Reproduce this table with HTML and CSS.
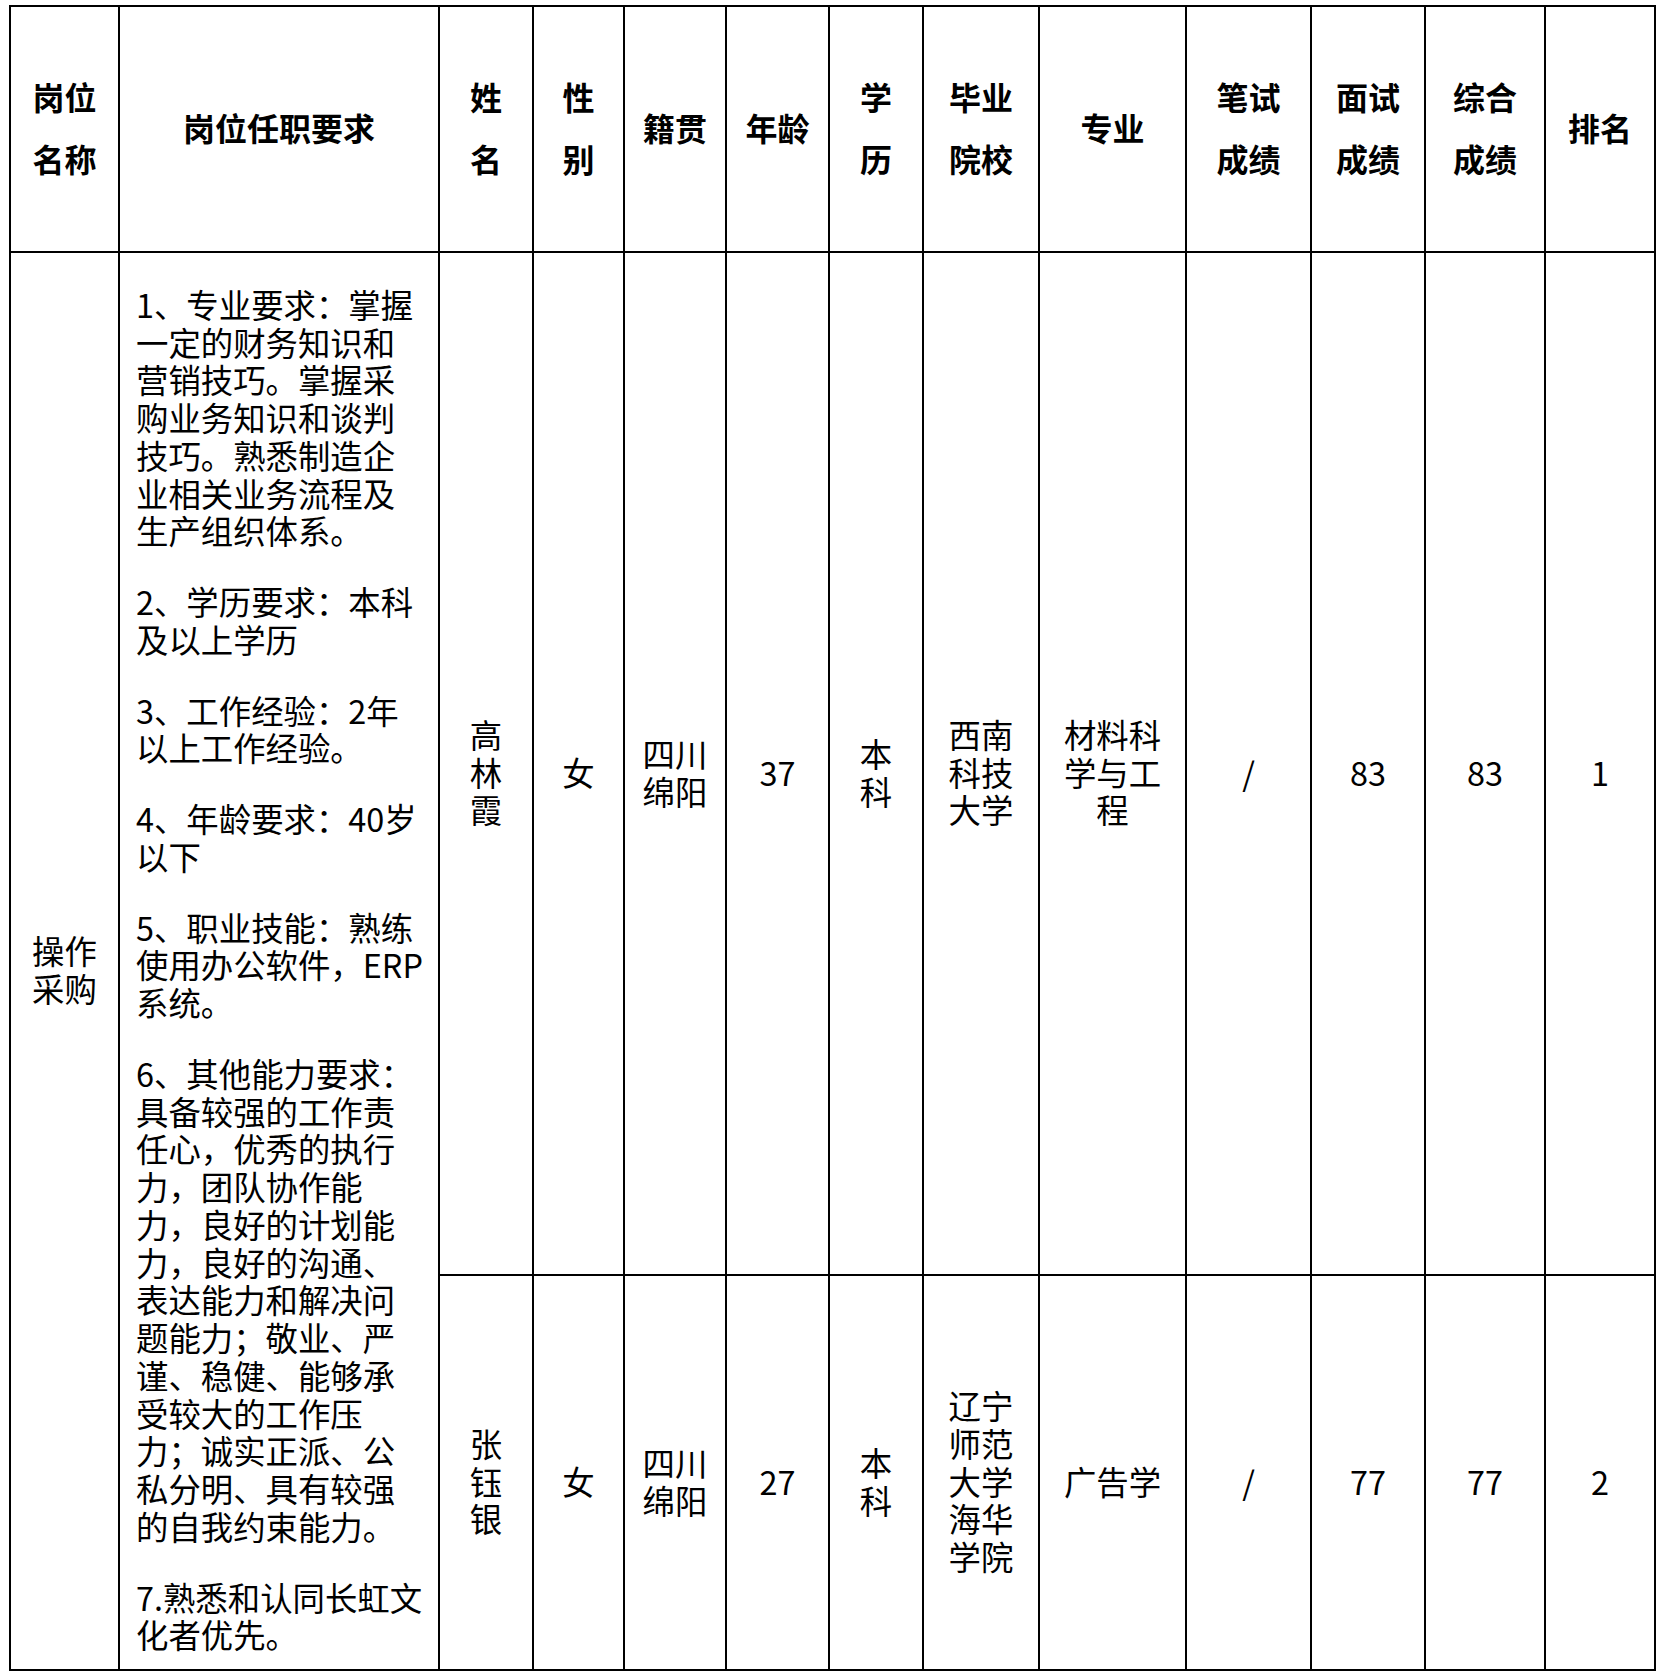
FILE: index.html
```html
<!DOCTYPE html>
<html lang="zh-CN">
<head>
<meta charset="utf-8">
<title>岗位成绩表</title>
<link rel="stylesheet" href="styles.css">
</head>
<body>
<div class="sheet">
  <div class="cell head">岗位<br>名称</div>
  <div class="cell head">岗位任职要求</div>
  <div class="cell head">姓<br>名</div>
  <div class="cell head">性<br>别</div>
  <div class="cell head">籍贯</div>
  <div class="cell head">年龄</div>
  <div class="cell head">学<br>历</div>
  <div class="cell head">毕业<br>院校</div>
  <div class="cell head">专业</div>
  <div class="cell head">笔试<br>成绩</div>
  <div class="cell head">面试<br>成绩</div>
  <div class="cell head">综合<br>成绩</div>
  <div class="cell head">排名</div>

  <div class="cell span2">操作<br>采购</div>
  <div class="cell span2 req">
    <div class="req-body">
      <p>1、专业要求：掌握<br>一定的财务知识和<br>营销技巧。掌握采<br>购业务知识和谈判<br>技巧。熟悉制造企<br>业相关业务流程及<br>生产组织体系。</p>
      <p>2、学历要求：本科<br>及以上学历</p>
      <p>3、工作经验：2年<br>以上工作经验。</p>
      <p>4、年龄要求：40岁<br>以下</p>
      <p>5、职业技能：熟练<br>使用办公软件，ERP<br>系统。</p>
      <p>6、其他能力要求：<br>具备较强的工作责<br>任心，优秀的执行<br>力，团队协作能<br>力，良好的计划能<br>力，良好的沟通、<br>表达能力和解决问<br>题能力；敬业、严<br>谨、稳健、能够承<br>受较大的工作压<br>力；诚实正派、公<br>私分明、具有较强<br>的自我约束能力。</p>
      <p>7.熟悉和认同长虹文<br>化者优先。</p>
    </div>
  </div>
  <div class="cell">高<br>林<br>霞</div>
  <div class="cell">女</div>
  <div class="cell">四川<br>绵阳</div>
  <div class="cell">37</div>
  <div class="cell">本<br>科</div>
  <div class="cell">西南<br>科技<br>大学</div>
  <div class="cell">材料科<br>学与工<br>程</div>
  <div class="cell">/</div>
  <div class="cell">83</div>
  <div class="cell">83</div>
  <div class="cell">1</div>

  <div class="cell">张<br>钰<br>银</div>
  <div class="cell">女</div>
  <div class="cell">四川<br>绵阳</div>
  <div class="cell">27</div>
  <div class="cell">本<br>科</div>
  <div class="cell">辽宁<br>师范<br>大学<br>海华<br>学院</div>
  <div class="cell">广告学</div>
  <div class="cell">/</div>
  <div class="cell">77</div>
  <div class="cell">77</div>
  <div class="cell">2</div>
</div>
</body>
</html>
```
FILE: styles.css
```css
html, body {
  margin: 0;
  padding: 0;
  background: #ffffff;
}

body {
  font-family: "Noto Sans CJK SC", "Noto Sans", sans-serif;
  color: #000000;
}

.sheet {
  display: grid;
  grid-template-columns: 109px 320px 94px 91px 102px 103px 94px 116px 147px 125px 114px 120px 110px;
  grid-template-rows: 246px 1023px 395px;
  width: max-content;
  margin: 5px 0 0 9px;
  border-left: 2px solid #000000;
  border-top: 2px solid #000000;
}

.cell {
  box-sizing: border-box;
  border-right: 2px solid #000000;
  border-bottom: 2px solid #000000;
  display: flex;
  align-items: center;
  justify-content: center;
  text-align: center;
  font-size: 32.4px;
  line-height: 37.75px;
  padding: 16px 0 0 0;
}

.head {
  font-size: 32px;
  font-weight: 700;
  line-height: 62px;
  padding: 0 0 4px 0;
}

.span2 {
  grid-row: span 2;
}

.req {
  justify-content: flex-start;
  text-align: left;
  white-space: nowrap;
  padding-left: 16px;
}

.req p {
  margin: 0;
}

.req p + p {
  margin-top: 33px;
}
```
